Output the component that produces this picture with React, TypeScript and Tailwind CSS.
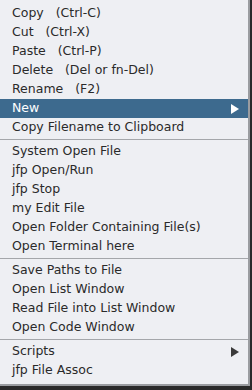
import React from "react";

type Item = { label: string; highlighted?: boolean; sub?: boolean } | "sep";

const items: Item[] = [
  { label: "Copy   (Ctrl-C)" },
  { label: "Cut   (Ctrl-X)" },
  { label: "Paste   (Ctrl-P)" },
  { label: "Delete   (Del or fn-Del)" },
  { label: "Rename   (F2)" },
  { label: "New", highlighted: true, sub: true },
  { label: "Copy Filename to Clipboard" },
  "sep",
  { label: "System Open File" },
  { label: "jfp Open/Run" },
  { label: "jfp Stop" },
  { label: "my Edit File" },
  { label: "Open Folder Containing File(s)" },
  { label: "Open Terminal here" },
  "sep",
  { label: "Save Paths to File" },
  { label: "Open List Window" },
  { label: "Read File into List Window" },
  { label: "Open Code Window" },
  "sep",
  { label: "Scripts", sub: true },
  { label: "jfp File Assoc" },
];

export default function App() {
  return (
    <div className="w-[252px] h-[390px] bg-[#2a2a2a] overflow-hidden">
      <div
        className="w-[250px] h-[386px] bg-[#eeeff3] border-r-2 border-b-2 border-[#9a9ca0] pt-[4px] text-[12.5px] text-[#2a2a2a]"
        style={{ fontFamily: '"DejaVu Sans", sans-serif' }}
      >
        {items.map((it, i) =>
          it === "sep" ? (
            <div key={i} className="h-[5px] flex flex-col justify-center">
              <div className="h-px bg-[#a4a6aa]" />
            </div>
          ) : (
            <div
              key={i}
              className={
                "h-[19px] flex items-center justify-between pl-[12px] pr-[9px] whitespace-pre leading-none " +
                (it.highlighted ? "bg-[#3d6a8e] text-white" : "")
              }
            >
              <span>{it.label}</span>
              {it.sub && (
                <svg width="8" height="10" viewBox="0 0 8 10">
                  <path d="M0 0 L8 5 L0 10 Z" fill={it.highlighted ? "#ffffff" : "#3a3a3a"} />
                </svg>
              )}
            </div>
          )
        )}
      </div>
    </div>
  );
}
